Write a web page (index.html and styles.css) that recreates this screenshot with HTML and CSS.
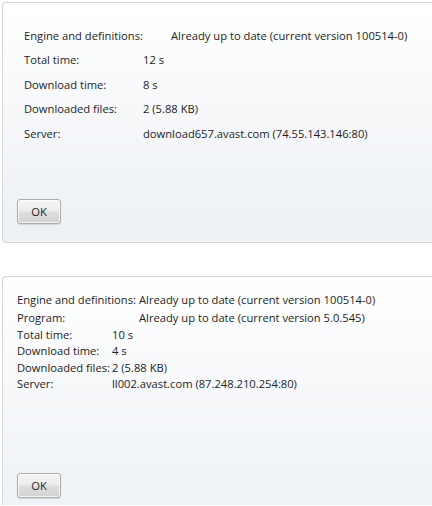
FILE: index.html
```html
<!DOCTYPE html>
<html lang="en">
<head>
<meta charset="utf-8">
<title>Update results</title>
<link rel="stylesheet" href="styles.css">
</head>
<body>
  <section class="panel panel-a">
    <div class="rows-a">
      <div class="row-a"><span class="lab lab-wide">Engine and definitions:</span><span>Already up to date (current version 100514-0)</span></div>
      <div class="row-a"><span class="lab">Total time:</span><span>12 s</span></div>
      <div class="row-a"><span class="lab">Download time:</span><span>8 s</span></div>
      <div class="row-a"><span class="lab">Downloaded files:</span><span>2 (5.88 KB)</span></div>
      <div class="row-a"><span class="lab">Server:</span><span>download657.avast.com (74.55.143.146:80)</span></div>
    </div>
    <button class="ok ok-a" type="button">OK</button>
  </section>

  <section class="panel panel-b">
    <div class="rows-b">
      <div class="row-b row-first"><span class="lbl lbl-eng">Engine and definitions:</span><span>Already up to date (current version 100514-0)</span></div>
      <div class="row-b"><span class="lbl lbl-eng">Program:</span><span>Already up to date (current version 5.0.545)</span></div>
      <div class="row-b"><span class="lbl">Total time:</span><span>10 s</span></div>
      <div class="row-b"><span class="lbl">Download time:</span><span>4 s</span></div>
      <div class="row-b"><span class="lbl">Downloaded files:</span><span>2 (5.88 KB)</span></div>
      <div class="row-b"><span class="lbl">Server:</span><span>ll002.avast.com (87.248.210.254:80)</span></div>
    </div>
    <button class="ok ok-b" type="button">OK</button>
  </section>
</body>
</html>
```

FILE: styles.css
```css
html, body {
  margin: 0;
  padding: 0;
  background: #ffffff;
}

body {
  width: 432px;
  height: 506px;
  padding: 2px 0 0 2px;
  box-sizing: border-box;
  overflow: hidden;
  font-family: "Open Sans", "Noto Sans", "Liberation Sans", sans-serif;
  font-size: 11.2px;
  color: #1e1e1e;
}

.panel {
  width: 430px;
  box-sizing: border-box;
  border: 1px solid #d6d6d6;
  border-right: none;
  border-radius: 4px 0 0 4px;
  background: linear-gradient(to bottom, #ffffff 0%, #f6f8fa 45%, #edf0f4 100%);
}

.panel-a {
  height: 241px;
  padding: 21px 0 0 21px;
}

.panel-b {
  height: 229px;
  margin-top: 33px;
  padding: 15px 0 0 14px;
  border-bottom: none;
  border-radius: 4px 0 0 0;
  background: linear-gradient(to bottom, #ffffff 0%, #f6f8fa 50%, #eff2f6 100%);
}

.rows-a {
  display: flex;
  flex-direction: column;
}

.row-a {
  display: flex;
  height: 24.4px;
  line-height: 24.4px;
  white-space: nowrap;
}

.lab {
  width: 119px;
  flex: none;
}

.lab-wide {
  width: 147px;
}

.rows-b {
  display: flex;
  flex-direction: column;
}

.row-b {
  display: flex;
  height: 16.6px;
  line-height: 16.6px;
  white-space: nowrap;
}

.row-first {
  margin-bottom: 1.5px;
}

.lbl {
  width: 95px;
  flex: none;
}

.lbl-eng {
  width: 122px;
}

.ok {
  display: block;
  width: 44px;
  height: 25px;
  padding: 0;
  border: 1px solid #a9acb0;
  border-radius: 3px;
  background: linear-gradient(to bottom, #f4f4f4 0%, #ececec 48%, #dedede 52%, #d3d3d3 100%);
  box-shadow: inset 0 0 0 1px rgba(255, 255, 255, 0.7), 0 1px 1px rgba(0, 0, 0, 0.12);
  font-family: inherit;
  font-size: 11.2px;
  color: #1e1e1e;
}

.ok-a {
  margin: 53px 0 0 -7px;
}

.ok-b {
  margin: 80px 0 0 0;
}
```
